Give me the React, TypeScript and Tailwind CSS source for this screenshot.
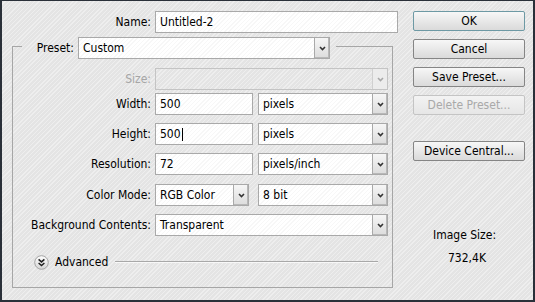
import React from "react";

const pageBg =
  "bg-[image:repeating-linear-gradient(135deg,#e4e4e4_0px,#e4e4e4_2px,#eeeeee_2px,#eeeeee_3px)]";
const fieldBg =
  "bg-[image:repeating-linear-gradient(135deg,#ffffff_0px,#ffffff_2px,#f7f7f7_2px,#f7f7f7_3px)]";

function Chevron({ disabled }: { disabled?: boolean }) {
  return (
    <svg width="7" height="5" viewBox="0 0 7 5">
      <polyline
        points="1,1 3.5,3.5 6,1"
        fill="none"
        stroke={disabled ? "#a8a8a8" : "#333"}
        strokeWidth="1.6"
      />
    </svg>
  );
}

function Dropdown({
  value,
  w,
  disabled,
}: {
  value?: string;
  w: string;
  disabled?: boolean;
}) {
  return (
    <div
      className={`flex h-[22px] ${w} border ${
        disabled ? "border-[#c4c4c4]" : `border-[#a9a9a9] ${fieldBg}`
      }`}
    >
      <div className="flex flex-1 items-center pl-[4px] overflow-hidden whitespace-nowrap">
        {value}
      </div>
      <div
        className={`flex w-[15px] items-center justify-center border-l ${
          disabled
            ? "border-[#d0d0d0] bg-[#ececec]"
            : "border-[#a9a9a9] bg-gradient-to-b from-[#f6f6f6] to-[#dcdcdc] shadow-[inset_-1px_-1px_0_#b8b8b8]"
        }`}
      >
        <Chevron disabled={disabled} />
      </div>
    </div>
  );
}

function Input({ value, w, cursor }: { value: string; w: string; cursor?: boolean }) {
  return (
    <div
      className={`flex h-[22px] ${w} items-center border border-[#a9a9a9] pl-[4px] ${fieldBg}`}
    >
      <span>{value}</span>
      {cursor && <span className="ml-[1px] inline-block h-[13px] w-px bg-black" />}
    </div>
  );
}

function Row({
  label,
  mt,
  disabledLabel,
  children,
}: {
  label: string;
  mt: string;
  disabledLabel?: boolean;
  children: React.ReactNode;
}) {
  return (
    <div className={`flex items-center ${mt}`}>
      <div
        className={`w-[138px] text-right whitespace-nowrap ${
          disabledLabel ? "text-[#a6a6a6]" : ""
        }`}
      >
        {label}
      </div>
      <div className="ml-[4px] flex gap-[5px]">{children}</div>
    </div>
  );
}

function Button({
  label,
  mt,
  primary,
  disabled,
}: {
  label: string;
  mt: string;
  primary?: boolean;
  disabled?: boolean;
}) {
  return (
    <div
      className={`${mt} flex h-[20px] w-[112px] items-center justify-center rounded-[2px] border ${
        disabled
          ? "border-[#c4c4c4] text-[#a9a9a9] bg-gradient-to-b from-[#f3f3f3] to-[#e6e6e6]"
          : primary
          ? "border-[#6d99a4] bg-gradient-to-b from-[#f7f7f7] to-[#dadada]"
          : "border-[#858585] bg-gradient-to-b from-[#f7f7f7] to-[#dadada]"
      }`}
    >
      {label}
    </div>
  );
}

export default function App() {
  return (
    <div
      className={`flex h-[302px] w-[535px] overflow-hidden border-t border-l-2 border-r-2 border-b-2 border-[#2a3039] ${pageBg} font-['DejaVu_Sans_Condensed','Liberation_Sans',sans-serif] text-[12px] leading-[14px] text-black`}
    >
      {/* Left column */}
      <div className="w-[398px]">
        <div className="mt-[10px] flex items-center">
          <div className="w-[149px] text-right">Name:</div>
          <div className="ml-[4px]">
            <Input value="Untitled-2" w="w-[243px]" />
          </div>
        </div>

        <fieldset className="ml-[10px] h-[255px] w-[381px] border border-[#a6a6a6]">
          <legend className="ml-[9px] pt-[4px] pr-[6px]">
            <div className="flex items-center">
              <div className="w-[52px] text-right">Preset:</div>
              <div className="ml-[4px]">
                <Dropdown value="Custom" w="w-[252px]" />
              </div>
            </div>
          </legend>

          <Row label="Size:" mt="mt-[9px]" disabledLabel>
            <Dropdown w="w-[233px]" disabled />
          </Row>
          <Row label="Width:" mt="mt-[3px]">
            <Input value="500" w="w-[98px]" />
            <Dropdown value="pixels" w="w-[130px]" />
          </Row>
          <Row label="Height:" mt="mt-[8px]">
            <Input value="500" w="w-[98px]" cursor />
            <Dropdown value="pixels" w="w-[130px]" />
          </Row>
          <Row label="Resolution:" mt="mt-[8px]">
            <Input value="72" w="w-[98px]" />
            <Dropdown value="pixels/inch" w="w-[130px]" />
          </Row>
          <Row label="Color Mode:" mt="mt-[9px]">
            <div className="flex gap-[9px]">
              <Dropdown value="RGB Color" w="w-[94px]" />
              <Dropdown value="8 bit" w="w-[130px]" />
            </div>
          </Row>
          <Row label="Background Contents:" mt="mt-[8px]">
            <Dropdown value="Transparent" w="w-[233px]" />
          </Row>

          <div className="mt-[18px] flex h-[16px] items-center">
            <div className="ml-[21px]">
              <svg width="15" height="15" viewBox="0 0 15 15" className="block">
                <defs>
                  <linearGradient id="adv" x1="0" y1="0" x2="0" y2="1">
                    <stop offset="0" stopColor="#ffffff" />
                    <stop offset="1" stopColor="#d4d4d4" />
                  </linearGradient>
                </defs>
                <circle cx="7.5" cy="7.5" r="6.8" fill="url(#adv)" stroke="#a3a3a3" />
                <polyline points="4.6,4.4 7.5,6.9 10.4,4.4" fill="none" stroke="#1f1f1f" strokeWidth="1.5" />
                <polyline points="4.6,8 7.5,10.5 10.4,8" fill="none" stroke="#1f1f1f" strokeWidth="1.5" />
              </svg>
            </div>
            <div className="ml-[6px]">Advanced</div>
            <div className="ml-[7px] mr-[14px] h-[2px] flex-1 border-t border-b border-t-[#a8a8a8] border-b-[#f8f8f8]" />
          </div>
        </fieldset>
      </div>

      {/* Right column */}
      <div className="ml-[13px] w-[112px]">
        <Button label="OK" mt="mt-[10px]" primary />
        <Button label="Cancel" mt="mt-[8px]" />
        <Button label="Save Preset..." mt="mt-[8px]" />
        <Button label="Delete Preset..." mt="mt-[8px]" disabled />
        <Button label="Device Central..." mt="mt-[26px]" />
        <div className="mt-[67px] pl-[20px]">Image Size:</div>
        <div className="mt-[9px] pl-[35px]">732,4K</div>
      </div>
    </div>
  );
}
